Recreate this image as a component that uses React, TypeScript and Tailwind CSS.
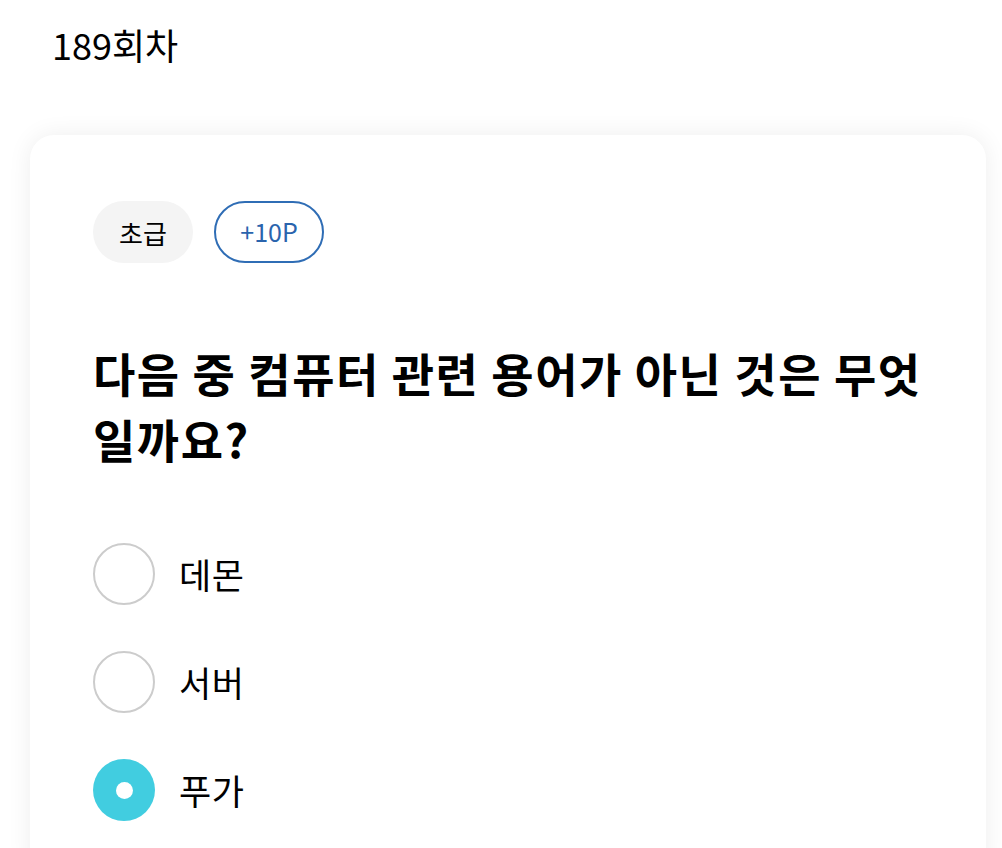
import React, { useState } from "react"

const options = ["데몬", "서버", "푸가"]

export default function App() {
  const [selected, setSelected] = useState(2)

  return (
    <div
      className="min-h-screen bg-white overflow-hidden text-black"
      style={{ fontFamily: '"Noto Sans CJK KR", "Noto Sans", sans-serif' }}
    >
      <div className="pl-[52px] pt-[18px] text-[36px] leading-[52px]">189회차</div>

      <div className="mt-[65px] ml-[30px] mr-[16px] rounded-[24px] bg-white shadow-[0_0_24px_rgba(0,0,0,0.07)] pl-[63px] pr-[40px] pt-[66px] pb-[60px]">
        <div className="flex items-center gap-[21px]">
          <span className="flex h-[62px] w-[100px] items-center justify-center rounded-full bg-[#f4f4f4] text-[26px]">
            초급
          </span>
          <span className="flex h-[62px] w-[110px] items-center justify-center rounded-full border-2 border-[#2f6db5] text-[25px] text-[#2a64ad]">
            +10P
          </span>
        </div>

        <h1 className="mt-[76px] text-[46px] font-bold leading-[66px] tracking-[1.5px]">
          다음 중 컴퓨터 관련 용어가 아닌 것은 무엇일까요?
        </h1>

        <div className="mt-[72px] flex flex-col gap-[46px]">
          {options.map((opt, i) => (
            <label key={opt} className="flex cursor-pointer items-center gap-[24px]" onClick={() => setSelected(i)}>
              {selected === i ? (
                <span className="flex h-[62px] w-[62px] items-center justify-center rounded-full bg-[#41cde0]">
                  <span className="h-[17px] w-[17px] rounded-full bg-white" />
                </span>
              ) : (
                <span className="h-[62px] w-[62px] rounded-full border-2 border-[#cccccc] bg-white" />
              )}
              <span className="text-[35px] leading-[50px] tracking-[0.5px]">{opt}</span>
            </label>
          ))}
        </div>
      </div>
    </div>
  )
}
